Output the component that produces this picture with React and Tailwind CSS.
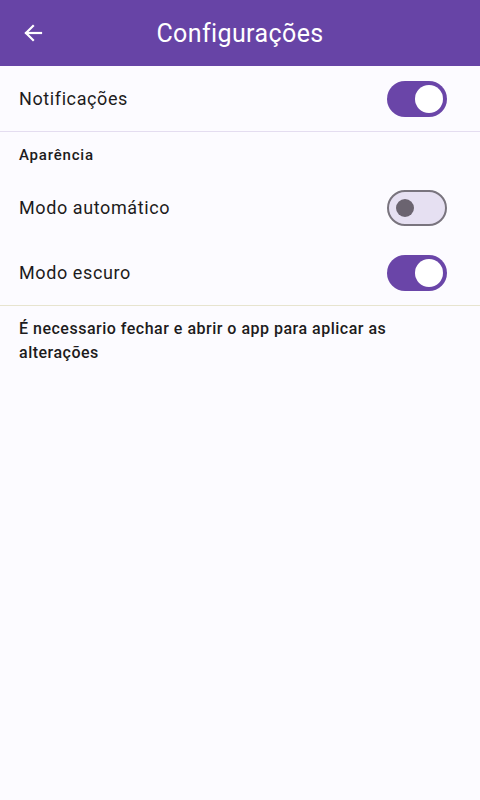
import { useState } from 'react';

function Toggle({ checked, onChange }) {
  return (
    <button
      type="button"
      onClick={() => onChange(!checked)}
      className={
        checked
          ? 'relative w-[60px] h-[36px] rounded-full bg-[#6a45a8] flex items-center shrink-0'
          : 'relative w-[60px] h-[36px] rounded-full bg-[#e6e0f2] border-2 border-[#79747e] flex items-center shrink-0'
      }
    >
      {checked ? (
        <span className="absolute right-[4px] w-[28px] h-[28px] rounded-full bg-white" />
      ) : (
        <span className="absolute left-[7px] w-[18px] h-[18px] rounded-full bg-[#6b6470]" />
      )}
    </button>
  );
}

function Row({ label, checked, onChange }) {
  return (
    <div className="h-[65px] flex items-center justify-between pl-[19px] pr-[33px]">
      <span className="text-[18px] text-[#1d1b20] tracking-[0.6px]">{label}</span>
      <Toggle checked={checked} onChange={onChange} />
    </div>
  );
}

export default function App() {
  const [notify, setNotify] = useState(true);
  const [auto, setAuto] = useState(false);
  const [dark, setDark] = useState(true);

  return (
    <div className="w-[480px] h-[800px] bg-[#fcfbff] flex flex-col" style={{ fontFamily: 'Roboto, "Noto Sans", sans-serif' }}>
      <header className="h-[66px] bg-[#6744a6] flex items-center relative shrink-0">
        <button type="button" className="absolute left-[21px] w-[24px] h-[24px] flex items-center justify-center" aria-label="Voltar">
          <svg width="24" height="24" viewBox="0 0 24 24" fill="none" stroke="white" strokeWidth="2.2" strokeLinecap="square">
            <path d="M20 12H5" />
            <path d="M12 5l-7 7 7 7" />
          </svg>
        </button>
        <h1 className="w-full text-center text-white text-[25px] tracking-[0.4px] leading-none">Configurações</h1>
      </header>

      <Row label="Notificações" checked={notify} onChange={setNotify} />
      <div className="h-px bg-[#e4ddf0]" />

      <div className="h-[43px] flex items-center pl-[19px] pt-[4px]">
        <span className="text-[15px] font-medium text-[#1d1b20] tracking-[0.8px]">Aparência</span>
      </div>

      <Row label="Modo automático" checked={auto} onChange={setAuto} />
      <Row label="Modo escuro" checked={dark} onChange={setDark} />
      <div className="h-px bg-[#e7e4cf]" />

      <p className="pt-[11px] pl-[19px] pr-[30px] text-[16px] leading-[24px] font-medium text-[#1d1b20] tracking-[0.5px]">
        É necessario fechar e abrir o app para aplicar as alterações
      </p>
    </div>
  );
}
